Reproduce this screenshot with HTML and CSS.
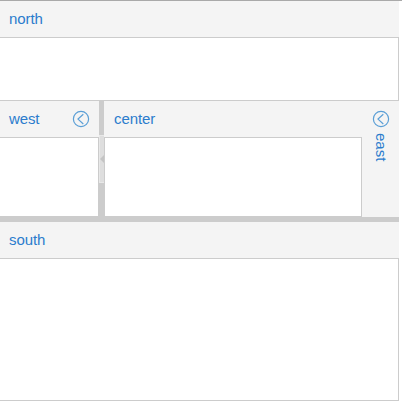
FILE: index.html
```
<!DOCTYPE html>
<html lang="en">
<head>
<meta charset="utf-8">
<title>Border layout</title>
<link rel="stylesheet" href="styles.css">
</head>
<body>
<div class="layout">
  <section class="panel north"><header class="title">north</header><div class="content"></div></section>
  <div class="middle">
    <section class="panel west">
      <header class="title">west
        <svg class="collapse" viewBox="0 0 18 18"><circle cx="9" cy="9" r="7.6"/><path d="M11.3 4.2 6 9.1l5.3 4.9"/></svg>
      </header>
      <div class="content"></div>
    </section>
    <div class="splitter"><div class="handle"><svg viewBox="0 0 4 8"><path d="M4 0v8L0 4z"/></svg></div></div>
    <section class="panel center"><header class="title">center</header><div class="content"></div></section>
    <aside class="east">
      <svg class="collapse" viewBox="0 0 18 18"><circle cx="9" cy="9" r="7.6"/><path d="M11.3 4.2 6 9.1l5.3 4.9"/></svg>
      <span class="east-label">east</span>
    </aside>
  </div>
  <div class="splitter-row"></div>
  <section class="panel south"><header class="title">south</header><div class="content"></div></section>
</div>
</body>
</html>
```
FILE: styles.css
```
* { box-sizing: border-box; }
body {
  margin: 0;
  height: 402px;
  overflow: hidden;
  border-top: 1px solid #a9a9a9;
  background: #fff;
  color: #2b7ccd;
  font: 15px/18px "Liberation Sans", Arial, sans-serif;
}
.layout { display: flex; flex-direction: column; width: 399px; height: 400px; }
.panel { display: flex; flex-direction: column; }
.title {
  display: flex;
  align-items: center;
  justify-content: space-between;
  flex: 0 0 36px;
  padding: 0 9px;
  background: #f4f4f4;
  letter-spacing: -0.1px;
}
.content { flex: 1; border: solid #ccc; border-width: 1px 1px 1px 0; background: #fff; }
.north { height: 100px; }
.middle { display: flex; height: 116px; }
.west { width: 99px; }
.center { width: 258px; }
.center .title { padding-left: 10px; }
.center .content { border-left-width: 1px; }
.splitter { width: 5px; padding-top: 34px; background: #ccc; }
.handle {
  display: flex;
  align-items: center;
  justify-content: flex-end;
  height: 48px;
  border: 1px solid #e8e8e8;
  border-right: 0;
  background: #dedede;
}
.handle svg { width: 4px; height: 8px; fill: #c4c4c4; }
.east { display: flex; flex-direction: column; align-items: center; width: 37px; padding-top: 9px; background: #f4f4f4; }
.collapse { flex: none; width: 18px; height: 18px; fill: none; stroke: #5b9fd6; stroke-width: 1.2; }
.east-label { margin-top: 5px; writing-mode: vertical-rl; }
.splitter-row { height: 5px; background: #ccc; }
.south { flex: 1; }
```
